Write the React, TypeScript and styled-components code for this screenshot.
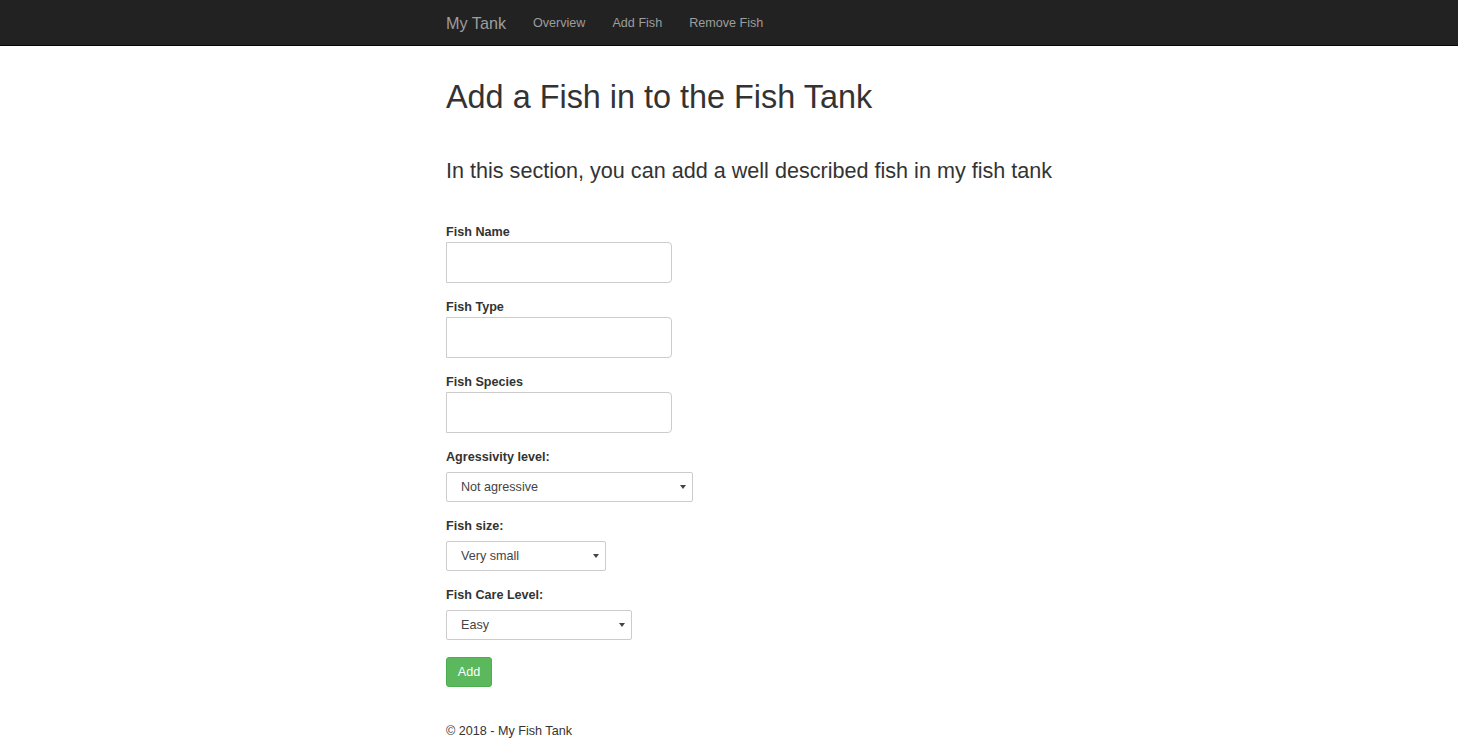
import React from 'react'
import styled, { createGlobalStyle } from 'styled-components'

const GlobalStyle = createGlobalStyle`
  html, body {
    margin: 0;
    padding: 0;
    background: #fff;
  }
  body {
    font-family: "Liberation Sans", Arial, Helvetica, sans-serif;
    font-size: 12.6px;
    line-height: 18px;
    color: #333;
  }
  * {
    box-sizing: border-box;
  }
`

const NavBar = styled.nav`
  height: 46px;
  background: #222;
  border-bottom: 1px solid #080808;
`
const NavInner = styled.div`
  width: 566px;
  margin: 0 auto;
  height: 45px;
  display: flex;
  align-items: center;
`
const Brand = styled.a`
  font-size: 16.2px;
  line-height: 18px;
  color: #9d9d9d;
  text-decoration: none;
  padding: 14px 13.5px 13px;
  margin-left: -13.5px;
  cursor: pointer;
`
const NavLink = styled.a`
  font-size: 12.6px;
  line-height: 18px;
  color: #9d9d9d;
  text-decoration: none;
  padding: 13.5px;
  cursor: pointer;

  :hover {
    color: #fff;
  }
`

const Container = styled.main`
  width: 566px;
  margin: 0 auto;
`
const Title = styled.h1`
  font-size: 32.4px;
  line-height: 35.6px;
  font-weight: 500;
  margin: 34px 0 0;
  color: #333;
`
const SubTitle = styled.h3`
  font-size: 21.6px;
  line-height: 24px;
  font-weight: 500;
  margin: 43px 0 0;
  white-space: nowrap;
  color: #333;
`
const Form = styled.form`
  margin-top: 40px;
  display: flex;
  flex-direction: column;
  align-items: flex-start;
`
const Field = styled.div`
  margin-bottom: 15px;
`
const Label = styled.label<{ gap: number }>`
  display: block;
  font-weight: 700;
  font-size: 12.6px;
  line-height: 19px;
  margin-bottom: ${({ gap }) => gap}px;
`
const TextInput = styled.input`
  display: block;
  width: 226px;
  height: 41px;
  border: 1px solid #ccc;
  border-radius: 0 4px 4px 0;
  padding: 0 10px;
  font-family: inherit;
  font-size: 12.6px;
  color: #555;
  outline: none;
`
const SelectWrap = styled.div`
  position: relative;
  display: inline-block;
`
const Select = styled.select<{ w: number }>`
  display: block;
  appearance: none;
  width: ${({ w }) => w}px;
  height: 30px;
  border: 1px solid #ccc;
  border-radius: 2px;
  background: #fff;
  padding: 0 20px 0 14px;
  font-family: inherit;
  font-size: 12.6px;
  color: #444;
  outline: none;
`
const Arrow = styled.svg`
  position: absolute;
  right: 7px;
  top: 13px;
  pointer-events: none;
`
const AddButton = styled.button`
  margin-top: 2px;
  height: 30px;
  padding: 0 10.8px;
  background: #5cb85c;
  border: 1px solid #4cae4c;
  border-radius: 3px;
  color: #fff;
  font-family: inherit;
  font-size: 12.6px;
  font-weight: 400;
  cursor: pointer;

  :hover {
    background: #449d44;
  }
`
const Footer = styled.footer`
  margin-top: 35px;
  font-size: 12.6px;
  line-height: 18px;
`

const DropDown = ({ width, options }: { width: number; options: string[] }) => (
  <SelectWrap>
    <Select w={width}>
      {options.map((o) => (
        <option key={o}>{o}</option>
      ))}
    </Select>
    <Arrow width="6" height="4" viewBox="0 0 6 4">
      <path d="M0 0 L6 0 L3 4 Z" fill="#444" />
    </Arrow>
  </SelectWrap>
)

export default function App() {
  return (
    <>
      <GlobalStyle />
      <NavBar>
        <NavInner>
          <Brand>My Tank</Brand>
          <NavLink>Overview</NavLink>
          <NavLink>Add Fish</NavLink>
          <NavLink>Remove Fish</NavLink>
        </NavInner>
      </NavBar>
      <Container>
        <Title>Add a Fish in to the Fish Tank</Title>
        <SubTitle>In this section, you can add a well described fish in my fish tank</SubTitle>
        <Form onSubmit={(e) => e.preventDefault()}>
          <Field>
            <Label gap={0}>Fish Name</Label>
            <TextInput type="text" />
          </Field>
          <Field>
            <Label gap={0}>Fish Type</Label>
            <TextInput type="text" />
          </Field>
          <Field>
            <Label gap={0}>Fish Species</Label>
            <TextInput type="text" />
          </Field>
          <Field>
            <Label gap={5}>Agressivity level:</Label>
            <DropDown width={247} options={['Not agressive', 'Semi agressive', 'Agressive']} />
          </Field>
          <Field>
            <Label gap={5}>Fish size:</Label>
            <DropDown width={160} options={['Very small', 'Small', 'Medium', 'Large']} />
          </Field>
          <Field>
            <Label gap={5}>Fish Care Level:</Label>
            <DropDown width={186} options={['Easy', 'Moderate', 'Difficult']} />
          </Field>
          <AddButton type="submit">Add</AddButton>
        </Form>
        <Footer>© 2018 - My Fish Tank</Footer>
      </Container>
    </>
  )
}
